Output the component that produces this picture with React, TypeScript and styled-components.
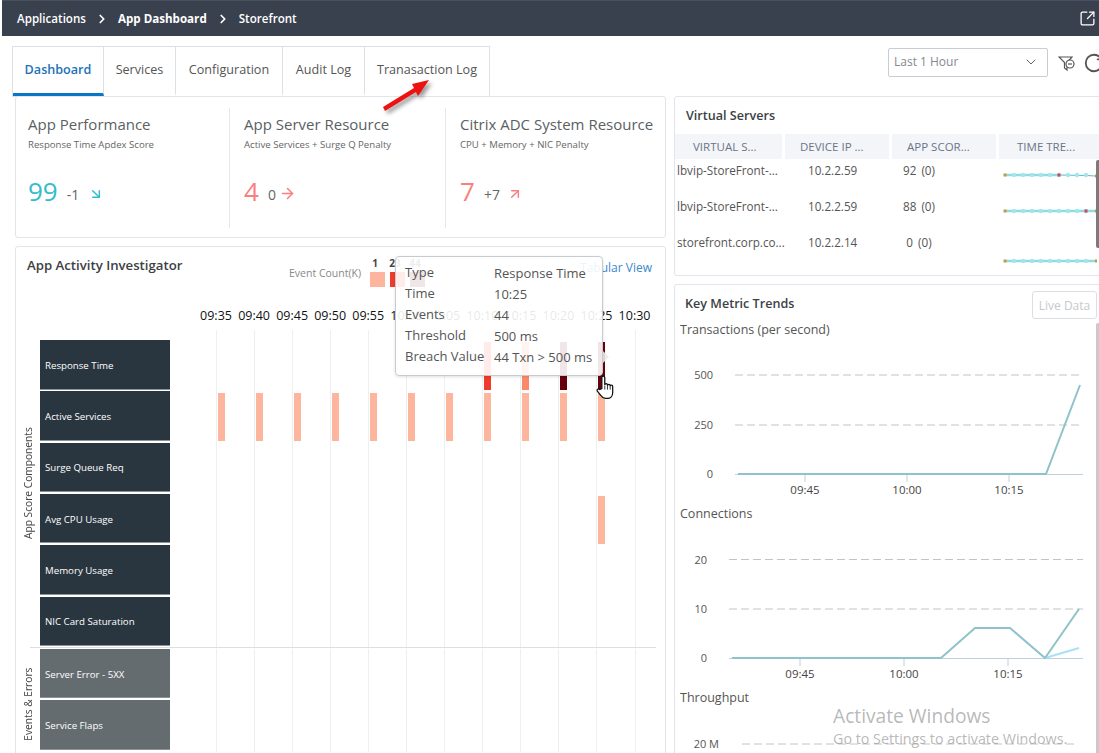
import { FC } from "react";
import styled, { createGlobalStyle } from "styled-components";
import { ArrowDownRight, ArrowRight, ArrowUpRight, ChevronDown, ChevronRight, RotateCw, SquareArrowOutUpRight } from "lucide-react";

const Global = createGlobalStyle`
  html, body { margin: 0; padding: 0; background: #fff; }
  body { font-family: "Open Sans", "Liberation Sans", sans-serif; color: #555; }
  * { box-sizing: border-box; }
`;

const Root = styled.div`
  position: relative;
  width: 1099px;
  height: 753px;
  overflow: hidden;
  background: #fff;
`;

const Header = styled.header`
  height: 36px;
  margin-left: 2px;
  padding: 0 3px 0 15px;
  display: flex;
  align-items: center;
  background: #3a414e;
  border-top: 1px solid #4a5260;
  color: #fff;
  font-size: 11.6px;
  font-weight: 600;
`;
const Crumb = styled.span<{ $bold?: boolean }>`
  font-weight: ${(p) => (p.$bold ? 700 : 600)};
`;
const CrumbSep = styled.span`
  display: flex;
  margin: 0 9px;
`;
const HeaderAction = styled.span`
  display: flex;
  margin-left: auto;
`;

const Toolbar = styled.div`
  height: 60px;
  padding: 10px 0 0 12px;
  display: flex;
  align-items: flex-start;
`;
const Tabs = styled.nav`
  display: flex;
  height: 51px;
  border: 1px solid #dcdfe3;
`;
const Tab = styled.div<{ $active?: boolean; $width: number }>`
  width: ${(p) => p.$width}px;
  padding-bottom: 1px;
  display: flex;
  align-items: center;
  justify-content: center;
  font-size: 12.6px;
  font-weight: ${(p) => (p.$active ? 600 : 400)};
  color: ${(p) => (p.$active ? "#2272b9" : "#555")};
  border-right: 1px solid #dcdfe3;
  border-bottom: 3px solid ${(p) => (p.$active ? "#0b76c5" : "transparent")};
  &:last-child { border-right: 0; }
`;
const Controls = styled.div`
  margin-left: auto;
  margin-right: -6px;
  padding-top: 2px;
  display: flex;
  align-items: center;
  gap: 10px;
`;
const Select = styled.div`
  width: 160px;
  height: 29px;
  padding: 0 8px 2px 5px;
  display: flex;
  align-items: center;
  justify-content: space-between;
  border: 1px solid #c9ccd0;
  border-radius: 2px;
  font-size: 12px;
  color: #858a90;
`;
const Refresh = styled.span`
  display: flex;
  margin-left: -3px;
  color: #555;
`;

const Main = styled.main`
  padding-left: 15px;
  display: grid;
  grid-template-columns: 651px 430px;
  gap: 8px;
`;
const Column = styled.div`
  display: flex;
  flex-direction: column;
  gap: 8px;
`;
const Card = styled.section<{ $height?: number }>`
  position: relative;
  height: ${(p) => (p.$height ? `${p.$height}px` : "auto")};
  border: 1px solid #e2e5e9;
  border-radius: 3px;
  background: #fff;
`;

const Summary = styled.div`
  margin-top: 11px;
  height: 120px;
  display: grid;
  grid-template-columns: 214px 216px 1fr;
`;
const Kpi = styled.div`
  padding: 5px 0 0 12px;
  border-right: 1px solid #e6e8eb;
  &:last-child { border-right: 0; padding-left: 14px; }
  &:nth-child(2) { padding-left: 14px; }
`;
const KpiTitle = styled.div`
  font-size: 15px;
  line-height: 22px;
  color: #5a5f63;
  white-space: nowrap;
`;
const KpiSub = styled.div`
  margin-top: 3px;
  font-size: 9.6px;
  line-height: 14px;
  color: #666;
`;
const KpiScore = styled.div`
  margin-top: 21px;
  height: 36px;
  display: flex;
  align-items: center;
`;
const KpiValue = styled.span<{ $color: string }>`
  font-size: 26px;
  line-height: 36px;
  color: ${(p) => p.$color};
`;
const KpiDelta = styled.span<{ $gap: number }>`
  margin: 7px ${(p) => p.$gap}px 0 9px;
  font-size: 14px;
  color: #666;
`;
const KpiArrow = styled.span<{ $color: string }>`
  display: flex;
  margin-top: 5px;
  color: ${(p) => p.$color};
`;

const ActivityHead = styled.div`
  height: 59px;
  padding-left: 11px;
  display: flex;
  align-items: flex-start;
`;
const CardTitle = styled.h3`
  margin: 0;
  font-size: 12.6px;
  line-height: 20px;
  font-weight: 600;
  color: #3c4145;
  white-space: nowrap;
`;
const ActivityTitle = styled(CardTitle)`
  width: 262px;
  margin-top: 8px;
  font-size: 13.2px;
`;
const Legend = styled.div`
  display: flex;
  align-items: flex-start;
  gap: 5px;
  padding-top: 10px;
`;
const LegendText = styled.span`
  width: 76px;
  margin-top: 9px;
  font-size: 10.5px;
  line-height: 14px;
  color: #888;
  white-space: nowrap;
`;
const LegendItem = styled.div`
  width: 15px;
  display: flex;
  flex-direction: column;
  align-items: center;
  font-size: 10px;
  font-weight: 700;
  line-height: 12px;
  color: #444;
`;
const LegendCount = styled.span`
  margin-right: 5px;
`;
const Swatch = styled.span<{ $color: string }>`
  width: 15px;
  height: 15px;
  margin-top: 3px;
  background: ${(p) => p.$color};
`;
const TabularLink = styled.a`
  margin: 13px 13px 0 auto;
  font-size: 12px;
  line-height: 16px;
  color: #3d88c9;
`;

const TimeAxis = styled.div`
  height: 24px;
  padding: 1px 0 0 181px;
  display: flex;
`;
const TimeLabel = styled.span`
  flex: 0 0 38.05px;
  text-align: center;
  font-size: 12.5px;
  line-height: 18px;
  color: #111;
`;

const Heat = styled.div`
  display: flex;
  flex-direction: column;
`;
const Group = styled.div`
  display: flex;
`;
const GroupName = styled.div<{ $shift: number }>`
  flex: 0 0 23px;
  display: flex;
  align-items: center;
  justify-content: center;
  writing-mode: vertical-rl;
  transform: rotate(180deg);
  padding-top: ${(p) => (p.$shift > 0 ? p.$shift : 0)}px;
  padding-bottom: ${(p) => (p.$shift < 0 ? -p.$shift : 0)}px;
  margin-right: 1px;
  font-size: 10.2px;
  color: #444;
  white-space: nowrap;
`;
const Rows = styled.div`
  display: flex;
  flex-direction: column;
`;
const HeatRow = styled.div<{ $height?: number }>`
  height: ${(p) => p.$height ?? 51.34}px;
  display: flex;
`;
const RowLabel = styled.div<{ $muted?: boolean }>`
  flex: 0 0 130px;
  height: 49.5px;
  padding: 2px 0 0 5px;
  display: flex;
  align-items: center;
  background: ${(p) => (p.$muted ? "#656c70" : "#2a363f")};
  border-bottom: 1px solid #8d9498;
  font-size: 9.7px;
  color: #fff;
  white-space: nowrap;
`;
const TopGap = styled.div`
  flex: 0 0 154px;
`;
const Plot = styled.div`
  padding-left: 46px;
  display: flex;
`;
const Cell = styled.div`
  flex: 0 0 38.05px;
  padding: 2px 0 0 2px;
  border-left: 1px solid #eeeff0;
  &:last-child { flex-basis: 1px; }
`;
const Bar = styled.div<{ $color: string }>`
  width: 7px;
  height: 48px;
  margin-left: -1px;
  background: ${(p) => p.$color};
`;
const Divider = styled.div`
  height: 1px;
  margin: -1px 9px 1px 14px;
  background: #dcdfe1;
`;

const Tooltip = styled.div`
  position: absolute;
  left: 379px;
  top: 9px;
  width: 208px;
  height: 120px;
  padding: 4px 9px;
  display: grid;
  grid-template-columns: 89px 1fr;
  grid-auto-rows: 21px;
  align-items: center;
  background: rgba(255, 255, 255, 0.9);
  border: 1px solid #c8cbce;
  border-radius: 4px;
  box-shadow: 0 1px 3px rgba(0, 0, 0, 0.12);
  font-size: 13px;
  color: #555;
  white-space: nowrap;
  &::after {
    content: "";
    position: absolute;
    right: -7px;
    top: 94px;
    border-left: 6px solid rgba(235, 235, 235, 0.9);
    border-top: 6px solid transparent;
    border-bottom: 6px solid transparent;
  }
`;
const TipValue = styled.span`
  padding-top: 2px;
`;
const HandCursor = styled.svg`
  position: absolute;
  left: 580px;
  top: 128px;
`;

const TableHead = styled.div`
  display: grid;
  grid-template-columns: 107px 104px 104px 104px;
  column-gap: 3px;
`;
const HeadCell = styled.div<{ $pad: number }>`
  height: 25px;
  padding-left: ${(p) => p.$pad}px;
  display: flex;
  align-items: center;
  background: #f3f5f9;
  font-size: 11.5px;
  color: #6a7688;
  white-space: nowrap;
`;
const TableRow = styled.div`
  height: 36px;
  display: grid;
  grid-template-columns: 107px 104px 104px 104px;
  column-gap: 3px;
  font-size: 11.7px;
  line-height: 22px;
  color: #555;
`;
const NameCell = styled.div`
  padding-left: 2px;
  white-space: nowrap;
`;
const IpCell = styled.div`
  padding-left: 23px;
`;
const ScoreCell = styled.div`
  width: 54px;
  display: flex;
  justify-content: center;
  gap: 5px;
`;
const Spark = styled.svg<{ $top: number }>`
  margin: ${(p) => p.$top}px 0 0 4px;
  display: block;
`;
const ServersTitle = styled(CardTitle)`
  padding: 9px 0 8px 11px;
  height: 37px;
`;

const TrendsHead = styled.div`
  height: 36px;
  padding: 6px 6px 0 10px;
  display: flex;
  align-items: flex-start;
  justify-content: space-between;
`;
const TrendsTitle = styled(CardTitle)`
  margin-top: 3px;
`;
const LiveButton = styled.button`
  width: 65px;
  height: 28px;
  padding: 0;
  background: #fff;
  border: 1px solid #dcdfe2;
  border-radius: 3px;
  font: 12px "Open Sans", sans-serif;
  color: #c6c9cc;
`;
const ChartTitle = styled.div`
  padding-left: 5px;
  height: 18px;
  font-size: 12.5px;
  line-height: 18px;
  color: #555;
`;
const ChartSvg = styled.svg`
  display: block;
  margin: -1px 0 1px -1px;
`;
const Scrollbar = styled.div<{ $top: number; $height: number; $color: string }>`
  position: absolute;
  left: 421px;
  top: ${(p) => p.$top}px;
  width: 3px;
  height: ${(p) => p.$height}px;
  border-radius: 2px 0 0 2px;
  background: ${(p) => p.$color};
`;

const Annotation = styled.svg`
  position: absolute;
  left: 376px;
  top: 74px;
  filter: drop-shadow(3px 3px 2px rgba(0, 0, 0, 0.4));
`;
const Watermark = styled.div`
  position: absolute;
  left: 833px;
  top: 702px;
  color: rgba(140, 140, 140, 0.62);
  pointer-events: none;
`;
const WatermarkTitle = styled.div`
  font-size: 19.2px;
  line-height: 27px;
`;
const WatermarkSub = styled.div`
  font-size: 14.3px;
  line-height: 19px;
  white-space: nowrap;
`;

const PEACH = "#fdb59e";
const RED = "#ef3b2c";
const ORANGE = "#fc8a6a";
const DARK = "#67000d";
const TIMES = ["09:35", "09:40", "09:45", "09:50", "09:55", "10:00", "10:05", "10:10", "10:15", "10:20", "10:25", "10:30"];
const active: Record<number, string> = {};
TIMES.slice(0, 11).forEach((_, i) => (active[i] = PEACH));

const Cells: FC<{ bars?: Record<number, string> }> = ({ bars = {} }) => (
  <Plot>
    {TIMES.map((t, i) => (
      <Cell key={t}>{bars[i] && <Bar $color={bars[i]} />}</Cell>
    ))}
  </Plot>
);

const scoreRows: { name: string; bars?: Record<number, string> }[] = [
  { name: "Response Time", bars: { 7: RED, 8: ORANGE, 9: DARK, 10: DARK } },
  { name: "Active Services", bars: active },
  { name: "Surge Queue Req" },
  { name: "Avg CPU Usage", bars: { 10: PEACH } },
  { name: "Memory Usage" },
  { name: "NIC Card Saturation" },
];

const servers = [
  { name: "lbvip-StoreFront-...", ip: "10.2.2.59", score: "92", top: 13, alert: 6, dip: true },
  { name: "lbvip-StoreFront-...", ip: "10.2.2.59", score: "88", top: 13, alert: 9, dip: false },
  { name: "storefront.corp.co...", ip: "10.2.2.14", score: "0", top: 27, alert: -1, dip: false },
];

const Sparkline: FC<{ top: number; alert: number; dip: boolean }> = ({ top, alert, dip }) => {
  const xs = Array.from({ length: 11 }, (_, i) => 2 + i * 9);
  return (
    <Spark $top={top} width="96" height="7" viewBox="0 0 96 7">
      <line x1="2" y1="3" x2={dip ? 56 : 92} y2="3" stroke="#8fdbe4" strokeWidth="2.4" />
      {dip && <polyline points="56,3 84,3.5 92,4" fill="none" stroke="#55bccb" strokeWidth="1" />}
      {xs.slice(1, 10).map((x) => (
        <circle key={x} cx={x} cy={3} r={2.2} fill="#a6e4ec" />
      ))}
      {alert > 0 && <rect x={xs[alert] - 1.5} y={1.5} width={3} height={3} fill="#c8495a" />}
      <rect x="0.5" y="1.5" width="3" height="3" fill="#c79a3c" />
      <rect x="92" y={dip ? 2.5 : 1.5} width="2" height="3" fill="#c79a3c" />
    </Spark>
  );
};

interface TrendProps {
  height: number;
  labelX: number;
  gridX: number;
  gridEnd?: number;
  yTicks: { label: string; y: number }[];
  xTicks?: { label: string; x: number }[];
  base?: number;
  series?: { points: string; color: string }[];
}

const TrendChart: FC<TrendProps> = ({ height, labelX, gridX, gridEnd = 409, yTicks, xTicks = [], base, series = [] }) => (
  <ChartSvg width="425" height={height} viewBox={`0 0 425 ${height}`}>
    {yTicks.map((t) => (
      <g key={t.label}>
        <text x={labelX} y={t.y + 4} textAnchor="end" fontSize="11" fill="#555" fontFamily="Open Sans">
          {t.label}
        </text>
        {t.y !== base && <line x1={gridX} x2={gridEnd} y1={t.y} y2={t.y} stroke="#c4c4c4" strokeDasharray="8 4" />}
      </g>
    ))}
    {base !== undefined && <line x1={gridX} x2={gridEnd} y1={base + 0.5} y2={base + 0.5} stroke="#bfd0dc" />}
    {xTicks.map((t) => (
      <g key={t.label}>
        <line x1={t.x} x2={t.x} y1={base} y2={(base ?? 0) + 8} stroke="#bfd0dc" />
        <text x={t.x} y={(base ?? 0) + 20} textAnchor="middle" fontSize="11.5" fill="#444" fontFamily="Open Sans">
          {t.label}
        </text>
      </g>
    ))}
    {series.map((s) => (
      <polyline key={s.points} points={s.points} fill="none" stroke={s.color} strokeWidth="2" />
    ))}
  </ChartSvg>
);

const App: FC = () => (
  <Root>
    <Global />
    <Header>
      <Crumb>Applications</Crumb>
      <CrumbSep><ChevronRight size={14} strokeWidth={3} /></CrumbSep>
      <Crumb $bold>App Dashboard</Crumb>
      <CrumbSep><ChevronRight size={14} strokeWidth={3} /></CrumbSep>
      <Crumb>Storefront</Crumb>
      <HeaderAction><SquareArrowOutUpRight size={17} strokeWidth={1.8} /></HeaderAction>
    </Header>

    <Toolbar>
      <Tabs>
        <Tab $active $width={91}>Dashboard</Tab>
        <Tab $width={72}>Services</Tab>
        <Tab $width={107}>Configuration</Tab>
        <Tab $width={82}>Audit Log</Tab>
        <Tab $width={124}>Tranasaction Log</Tab>
      </Tabs>
      <Controls>
        <Select>
          Last 1 Hour
          <ChevronDown size={16} strokeWidth={1.4} color="#555" />
        </Select>
        <svg width="18" height="18" viewBox="0 0 18 18" fill="none" stroke="#555" strokeWidth="1.2">
          <path d="M1 3h13l-5 5.5V16l-2.5-2V8.5z" />
          <circle cx="12" cy="10" r="4" fill="#fff" />
          <path d="M10 10h4" />
        </svg>
        <Refresh><RotateCw size={22} strokeWidth={2} /></Refresh>
      </Controls>
    </Toolbar>

    <Main>
      <Column>
        <Card $height={142}>
          <Summary>
            <Kpi>
              <KpiTitle>App Performance</KpiTitle>
              <KpiSub>Response Time Apdex Score</KpiSub>
              <KpiScore>
                <KpiValue $color="#34bccc">99</KpiValue>
                <KpiDelta $gap={9}>-1</KpiDelta>
                <KpiArrow $color="#34bccc"><ArrowDownRight size={16} strokeWidth={2.2} /></KpiArrow>
              </KpiScore>
            </Kpi>
            <Kpi>
              <KpiTitle>App Server Resource</KpiTitle>
              <KpiSub>Active Services + Surge Q Penalty</KpiSub>
              <KpiScore>
                <KpiValue $color="#fb7f7f">4</KpiValue>
                <KpiDelta $gap={3}>0</KpiDelta>
                <KpiArrow $color="#fb7f7f"><ArrowRight size={17} strokeWidth={2.2} /></KpiArrow>
              </KpiScore>
            </Kpi>
            <Kpi>
              <KpiTitle>Citrix ADC System Resource</KpiTitle>
              <KpiSub>CPU + Memory + NIC Penalty</KpiSub>
              <KpiScore>
                <KpiValue $color="#fb7f7f">7</KpiValue>
                <KpiDelta $gap={7}>+7</KpiDelta>
                <KpiArrow $color="#fb7f7f"><ArrowUpRight size={16} strokeWidth={2.2} /></KpiArrow>
              </KpiScore>
            </Kpi>
          </Summary>
        </Card>

        <Card $height={520}>
          <ActivityHead>
            <ActivityTitle>App Activity Investigator</ActivityTitle>
            <Legend>
              <LegendText>Event Count(K)</LegendText>
              <LegendItem><LegendCount>1</LegendCount><Swatch $color={PEACH} /></LegendItem>
              <LegendItem><LegendCount>23</LegendCount><Swatch $color={RED} /></LegendItem>
              <LegendItem><LegendCount>44</LegendCount><Swatch $color={DARK} /></LegendItem>
            </Legend>
            <TabularLink>Tabular View</TabularLink>
          </ActivityHead>
          <TimeAxis>
            {TIMES.map((t) => <TimeLabel key={t}>{t}</TimeLabel>)}
          </TimeAxis>
          <Heat>
            <HeatRow $height={10}>
              <TopGap />
              <Cells />
            </HeatRow>
            <Group>
              <GroupName $shift={22}>App Score Components</GroupName>
              <Rows>
                {scoreRows.map((r) => (
                  <HeatRow key={r.name}>
                    <RowLabel>{r.name}</RowLabel>
                    <Cells bars={r.bars} />
                  </HeatRow>
                ))}
              </Rows>
            </Group>
            <Divider />
            <Group>
              <GroupName $shift={-8}>Events &amp; Errors</GroupName>
              <Rows>
                <HeatRow><RowLabel $muted>Server Error - 5XX</RowLabel><Cells /></HeatRow>
                <HeatRow><RowLabel $muted>Service Flaps</RowLabel><Cells /></HeatRow>
              </Rows>
            </Group>
          </Heat>
          <Tooltip>
            <span>Type</span><TipValue>Response Time</TipValue>
            <span>Time</span><TipValue>10:25</TipValue>
            <span>Events</span><TipValue>44</TipValue>
            <span>Threshold</span><TipValue>500 ms</TipValue>
            <span>Breach Value</span><TipValue>44 Txn &gt; 500 ms</TipValue>
          </Tooltip>
          <HandCursor width="19" height="25" viewBox="0 0 18 24">
            <path
              d="M5.5 13V2.5a1.4 1.4 0 0 1 2.8 0V9.5a1.3 1.3 0 0 1 2.6 0v.7a1.3 1.3 0 0 1 2.6 0v.8a1.2 1.2 0 0 1 2.4 0v6c0 3-2 5.5-5 5.5H9c-2.5 0-3.5-1.5-5-3.5L1.2 15.5c-1-1.4 1-2.8 2.2-1.6z"
              fill="#fff"
              stroke="#111"
              strokeWidth="1.2"
            />
            <path d="M8.3 10v4M10.9 10v4M13.5 11v3" stroke="#111" strokeWidth="0.8" />
          </HandCursor>
        </Card>
      </Column>

      <Column>
        <Card $height={180}>
          <ServersTitle>Virtual Servers</ServersTitle>
          <TableHead>
            <HeadCell $pad={18}>VIRTUAL S...</HeadCell>
            <HeadCell $pad={15}>DEVICE IP ...</HeadCell>
            <HeadCell $pad={15}>APP SCOR...</HeadCell>
            <HeadCell $pad={18}>TIME TRE...</HeadCell>
          </TableHead>
          {servers.map((s) => (
            <TableRow key={s.name + s.score}>
              <NameCell>{s.name}</NameCell>
              <IpCell>{s.ip}</IpCell>
              <ScoreCell><span>{s.score}</span><span>(0)</span></ScoreCell>
              <div><Sparkline top={s.top} alert={s.alert} dip={s.dip} /></div>
            </TableRow>
          ))}
          <Scrollbar $top={63} $height={88} $color="#7b7b7b" />
        </Card>

        <Card $height={480}>
          <TrendsHead>
            <TrendsTitle>Key Metric Trends</TrendsTitle>
            <LiveButton>Live Data</LiveButton>
          </TrendsHead>
          <ChartTitle>Transactions (per second)</ChartTitle>
          <TrendChart
            height={166}
            labelX={39}
            gridX={61}
            base={136}
            yTicks={[{ label: "500", y: 37 }, { label: "250", y: 87 }, { label: "0", y: 136 }]}
            xTicks={[{ label: "09:45", x: 131 }, { label: "10:00", x: 233 }, { label: "10:15", x: 335 }]}
            series={[{ points: "64,136 372,136 406,47", color: "#8fc3c9" }]}
          />
          <ChartTitle>Connections</ChartTitle>
          <TrendChart
            height={166}
            labelX={33}
            gridX={55}
            base={136}
            yTicks={[{ label: "20", y: 37.5 }, { label: "10", y: 87 }, { label: "0", y: 136 }]}
            xTicks={[{ label: "09:45", x: 126 }, { label: "10:00", x: 230 }, { label: "10:15", x: 334 }]}
            series={[
              { points: "371,136 405,126", color: "#a9e1f7" },
              { points: "58,136 267,136 301,106 336,106 371,136 405,87", color: "#8fc3c9" },
            ]}
          />
          <ChartTitle>Throughput</ChartTitle>
          <TrendChart height={60} labelX={45} gridX={68} gridEnd={401} yTicks={[{ label: "20 M", y: 38 }]} />
          <Scrollbar $top={38} $height={440} $color="#c9c9c9" />
        </Card>
      </Column>
    </Main>

    <Annotation width="60" height="40" viewBox="0 0 60 40">
      <path d="M7 33 L38 14 L36 10 L53 6 L42 22 L40 18 L9 37 Z" fill="#ee1111" />
    </Annotation>

    <Watermark>
      <WatermarkTitle>Activate Windows</WatermarkTitle>
      <WatermarkSub>Go to Settings to activate Windows.</WatermarkSub>
    </Watermark>
  </Root>
);

export default App;
